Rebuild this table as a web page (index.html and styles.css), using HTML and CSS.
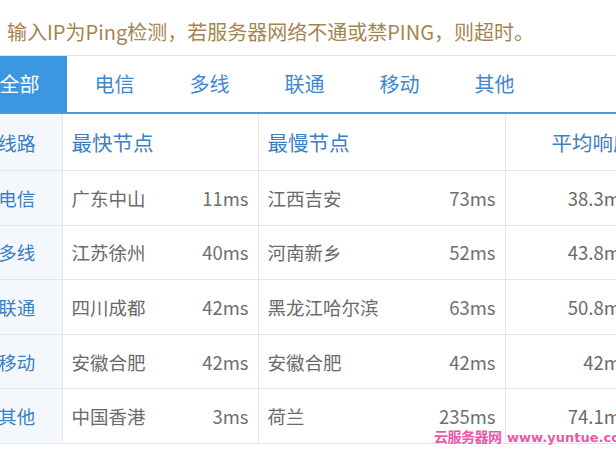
FILE: index.html
```html
<!DOCTYPE html>
<html lang="zh-CN">
<head>
<meta charset="utf-8">
<title>Ping检测</title>
<link rel="stylesheet" href="styles.css">
</head>
<body>
<div class="page">
  <p class="notice">输入IP为Ping检测，若服务器网络不通或禁PING，则超时。</p>
  <div class="tabs">
    <div class="tab active">全部</div>
    <div class="tab">电信</div>
    <div class="tab">多线</div>
    <div class="tab">联通</div>
    <div class="tab">移动</div>
    <div class="tab">其他</div>
  </div>
  <table class="grid">
    <colgroup>
      <col class="c-line">
      <col class="c-fast">
      <col class="c-slow">
      <col class="c-avg">
    </colgroup>
    <thead>
      <tr>
        <th class="line">线路</th>
        <th>最快节点</th>
        <th>最慢节点</th>
        <th class="avg">平均响应时间</th>
      </tr>
    </thead>
    <tbody>
      <tr>
        <td class="line">电信</td>
        <td><div class="node"><span>广东中山</span><span class="ms">11ms</span></div></td>
        <td><div class="node"><span>江西吉安</span><span class="ms">73ms</span></div></td>
        <td class="avg">38.3ms</td>
      </tr>
      <tr>
        <td class="line">多线</td>
        <td><div class="node"><span>江苏徐州</span><span class="ms">40ms</span></div></td>
        <td><div class="node"><span>河南新乡</span><span class="ms">52ms</span></div></td>
        <td class="avg">43.8ms</td>
      </tr>
      <tr>
        <td class="line">联通</td>
        <td><div class="node"><span>四川成都</span><span class="ms">42ms</span></div></td>
        <td><div class="node"><span>黑龙江哈尔滨</span><span class="ms">63ms</span></div></td>
        <td class="avg">50.8ms</td>
      </tr>
      <tr>
        <td class="line">移动</td>
        <td><div class="node"><span>安徽合肥</span><span class="ms">42ms</span></div></td>
        <td><div class="node"><span>安徽合肥</span><span class="ms">42ms</span></div></td>
        <td class="avg">42ms</td>
      </tr>
      <tr>
        <td class="line">其他</td>
        <td><div class="node"><span>中国香港</span><span class="ms">3ms</span></div></td>
        <td><div class="node"><span>荷兰</span><span class="ms">235ms</span></div></td>
        <td class="avg">74.1ms</td>
      </tr>
    </tbody>
  </table>
  <div class="watermark"><span class="wm-cn">云服务器网</span> <span class="wm-url">www.yuntue.com</span></div>
</div>
</body>
</html>
```
FILE: styles.css
```css
html, body {
  margin: 0;
  padding: 0;
  background: #ffffff;
}
body {
  width: 616px;
  height: 462px;
  overflow: hidden;
  font-family: "Noto Sans CJK SC", "Noto Sans", sans-serif;
}
.page {
  position: relative;
  margin-left: -28px;
  width: 780px;
}
.notice {
  margin: 0;
  padding: 19px 0 10px 35px;
  font-size: 20px;
  line-height: 26px;
  color: #a5854f;
}
.tabs {
  display: flex;
  border-top: 1px solid #e3e3e3;
  border-bottom: 2px solid #4a9ae0;
}
.tab {
  width: 95px;
  height: 56px;
  line-height: 56px;
  text-align: center;
  font-size: 20px;
  color: #3f86cf;
}
.tab.active {
  background: #3b98e0;
  color: #ffffff;
}
.grid {
  border-collapse: collapse;
  table-layout: fixed;
  width: 780px;
}
.c-line { width: 90px; }
.c-fast { width: 196px; }
.c-slow { width: 247px; }
.c-avg { width: 247px; }
.grid th,
.grid td {
  border: 1px solid #e6e6e6;
  padding: 0 9px;
  text-align: left;
  white-space: nowrap;
}
.grid tr > :first-child { border-left: none; }
.grid thead tr > * { border-top: none; }
.grid th {
  height: 56px;
  font-size: 20.5px;
  font-weight: normal;
  color: #3c7fc2;
}
.grid td {
  height: 53.6px;
  font-size: 18.5px;
  color: #6a6a6a;
}
.grid .line {
  background: #f4f8fc;
  color: #3b7fc4;
  text-align: center;
  padding: 0;
}
.grid th.line { font-size: 19px; }
.grid td.line { font-size: 18.5px; }
.node {
  display: flex;
  justify-content: space-between;
}
.ms {
  color: #707070;
}
.grid th.avg {
  padding-left: 46px;
}
.grid td.avg {
  text-align: right;
  padding-right: 122px;
}
.watermark {
  position: absolute;
  left: 462px;
  top: 426px;
  font-family: "DejaVu Sans", sans-serif;
  font-weight: bold;
  color: #e8489f;
  white-space: nowrap;
  opacity: 0.9;
}
.wm-cn {
  font-family: "Noto Sans CJK SC", sans-serif;
  font-size: 14px;
  letter-spacing: -0.5px;
}
.wm-url {
  font-size: 13px;
  letter-spacing: 0;
}
```
